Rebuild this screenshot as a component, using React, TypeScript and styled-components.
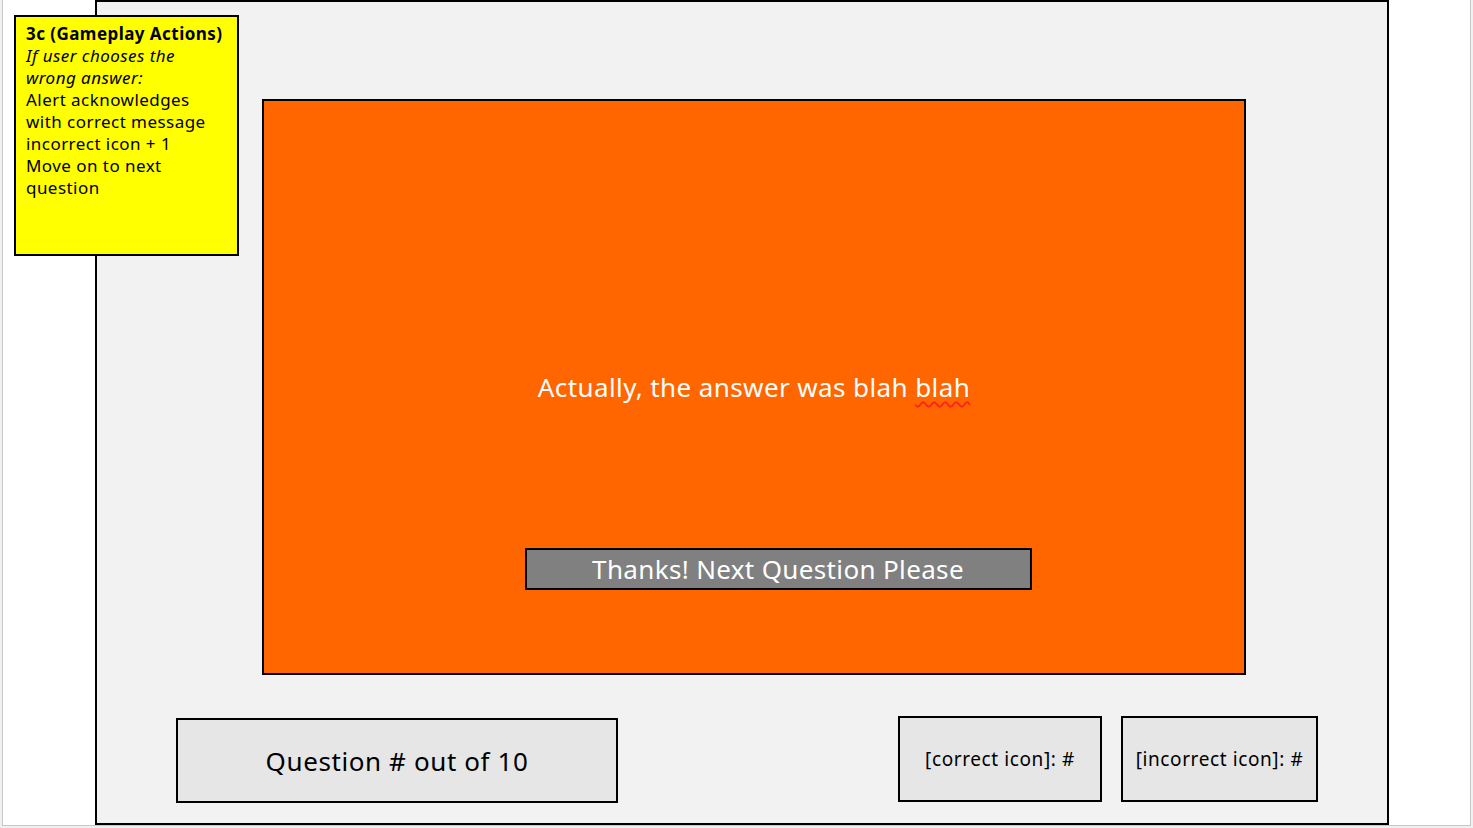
import React from "react";
import styled, { createGlobalStyle } from "styled-components";

const Global = createGlobalStyle`
  html, body { margin: 0; padding: 0; }
  body {
    background: #f0f0f0;
    font-family: "Noto Sans", "Open Sans", sans-serif;
    overflow: hidden;
  }
`;

const Slide = styled.div`
  position: relative;
  box-sizing: border-box;
  margin-left: 2px;
  width: 1469px;
  height: 826px;
  background: #ffffff;
  border: 1px solid #c8c8c8;
  border-top: none;
  padding-left: 92px;
`;

const Frame = styled.div`
  box-sizing: border-box;
  width: 1294px;
  height: 825px;
  border: 2px solid #000;
  background: #f2f2f2;
  display: flex;
  flex-direction: column;
`;

const Alert = styled.div`
  box-sizing: border-box;
  margin: 97px 0 0 165px;
  width: 984px;
  height: 576px;
  background: #ff6600;
  border: 2px solid #000;
  display: flex;
  flex-direction: column;
  align-items: center;
  color: #fff;
`;

const Message = styled.div`
  margin-top: 271px;
  font-size: 26px;
  line-height: 30px;
  letter-spacing: 0.4px;
`;

const Squiggle = styled.span`
  text-decoration-line: underline;
  text-decoration-style: wavy;
  text-decoration-color: #ff2020;
  text-decoration-thickness: 1.5px;
  text-underline-offset: 4px;
  text-decoration-skip-ink: none;
`;

const NextButton = styled.button`
  box-sizing: border-box;
  margin-top: 146px;
  margin-left: 48px;
  width: 507px;
  height: 42px;
  background: #808080;
  border: 2px solid #000;
  color: #fff;
  font-family: inherit;
  font-size: 26px;
  letter-spacing: 0.35px;
  padding: 0;
  line-height: 36px;
`;

const BottomRow = styled.div`
  display: flex;
  align-items: flex-start;
  margin-top: 41px;
  padding-left: 79px;
`;

const Counter = styled.div<{ $w: number; $h: number; $size: number; $top?: number; $left?: number }>`
  box-sizing: border-box;
  width: ${(p) => p.$w}px;
  height: ${(p) => p.$h}px;
  margin-top: ${(p) => p.$top ?? 0}px;
  margin-left: ${(p) => p.$left ?? 0}px;
  background: #e6e6e6;
  border: 2px solid #000;
  display: flex;
  align-items: center;
  justify-content: center;
  font-size: ${(p) => p.$size}px;
  letter-spacing: 0.6px;
  color: #000;
`;

const Note = styled.div`
  position: absolute;
  left: 11px;
  top: 15px;
  box-sizing: border-box;
  width: 225px;
  height: 241px;
  background: #ffff00;
  border: 2px solid #000;
  padding: 6px 10px;
  font-size: 17px;
  line-height: 22px;
  letter-spacing: 0.45px;
  color: #000;
`;

const NoteTitle = styled.div`
  font-weight: bold;
`;

const NoteItalic = styled.div`
  font-style: italic;
`;

export default function App() {
  return (
    <>
      <Global />
      <Slide>
        <Frame>
          <Alert>
            <Message>
              Actually, the answer was blah <Squiggle>blah</Squiggle>
            </Message>
            <NextButton>Thanks! Next Question Please</NextButton>
          </Alert>
          <BottomRow>
            <Counter $w={442} $h={85} $size={26} $top={2}>
              Question # out of 10
            </Counter>
            <Counter $w={204} $h={86} $size={19} $left={280}>
              [correct icon]: #
            </Counter>
            <Counter $w={197} $h={86} $size={19} $left={19}>
              [incorrect icon]: #
            </Counter>
          </BottomRow>
        </Frame>
        <Note>
          <NoteTitle>3c (Gameplay Actions)</NoteTitle>
          <NoteItalic>
            If user chooses the
            <br />
            wrong answer:
          </NoteItalic>
          <div>
            Alert acknowledges
            <br />
            with correct message
            <br />
            incorrect icon + 1
          </div>
          <div>
            Move on to next
            <br />
            question
          </div>
        </Note>
      </Slide>
    </>
  );
}
